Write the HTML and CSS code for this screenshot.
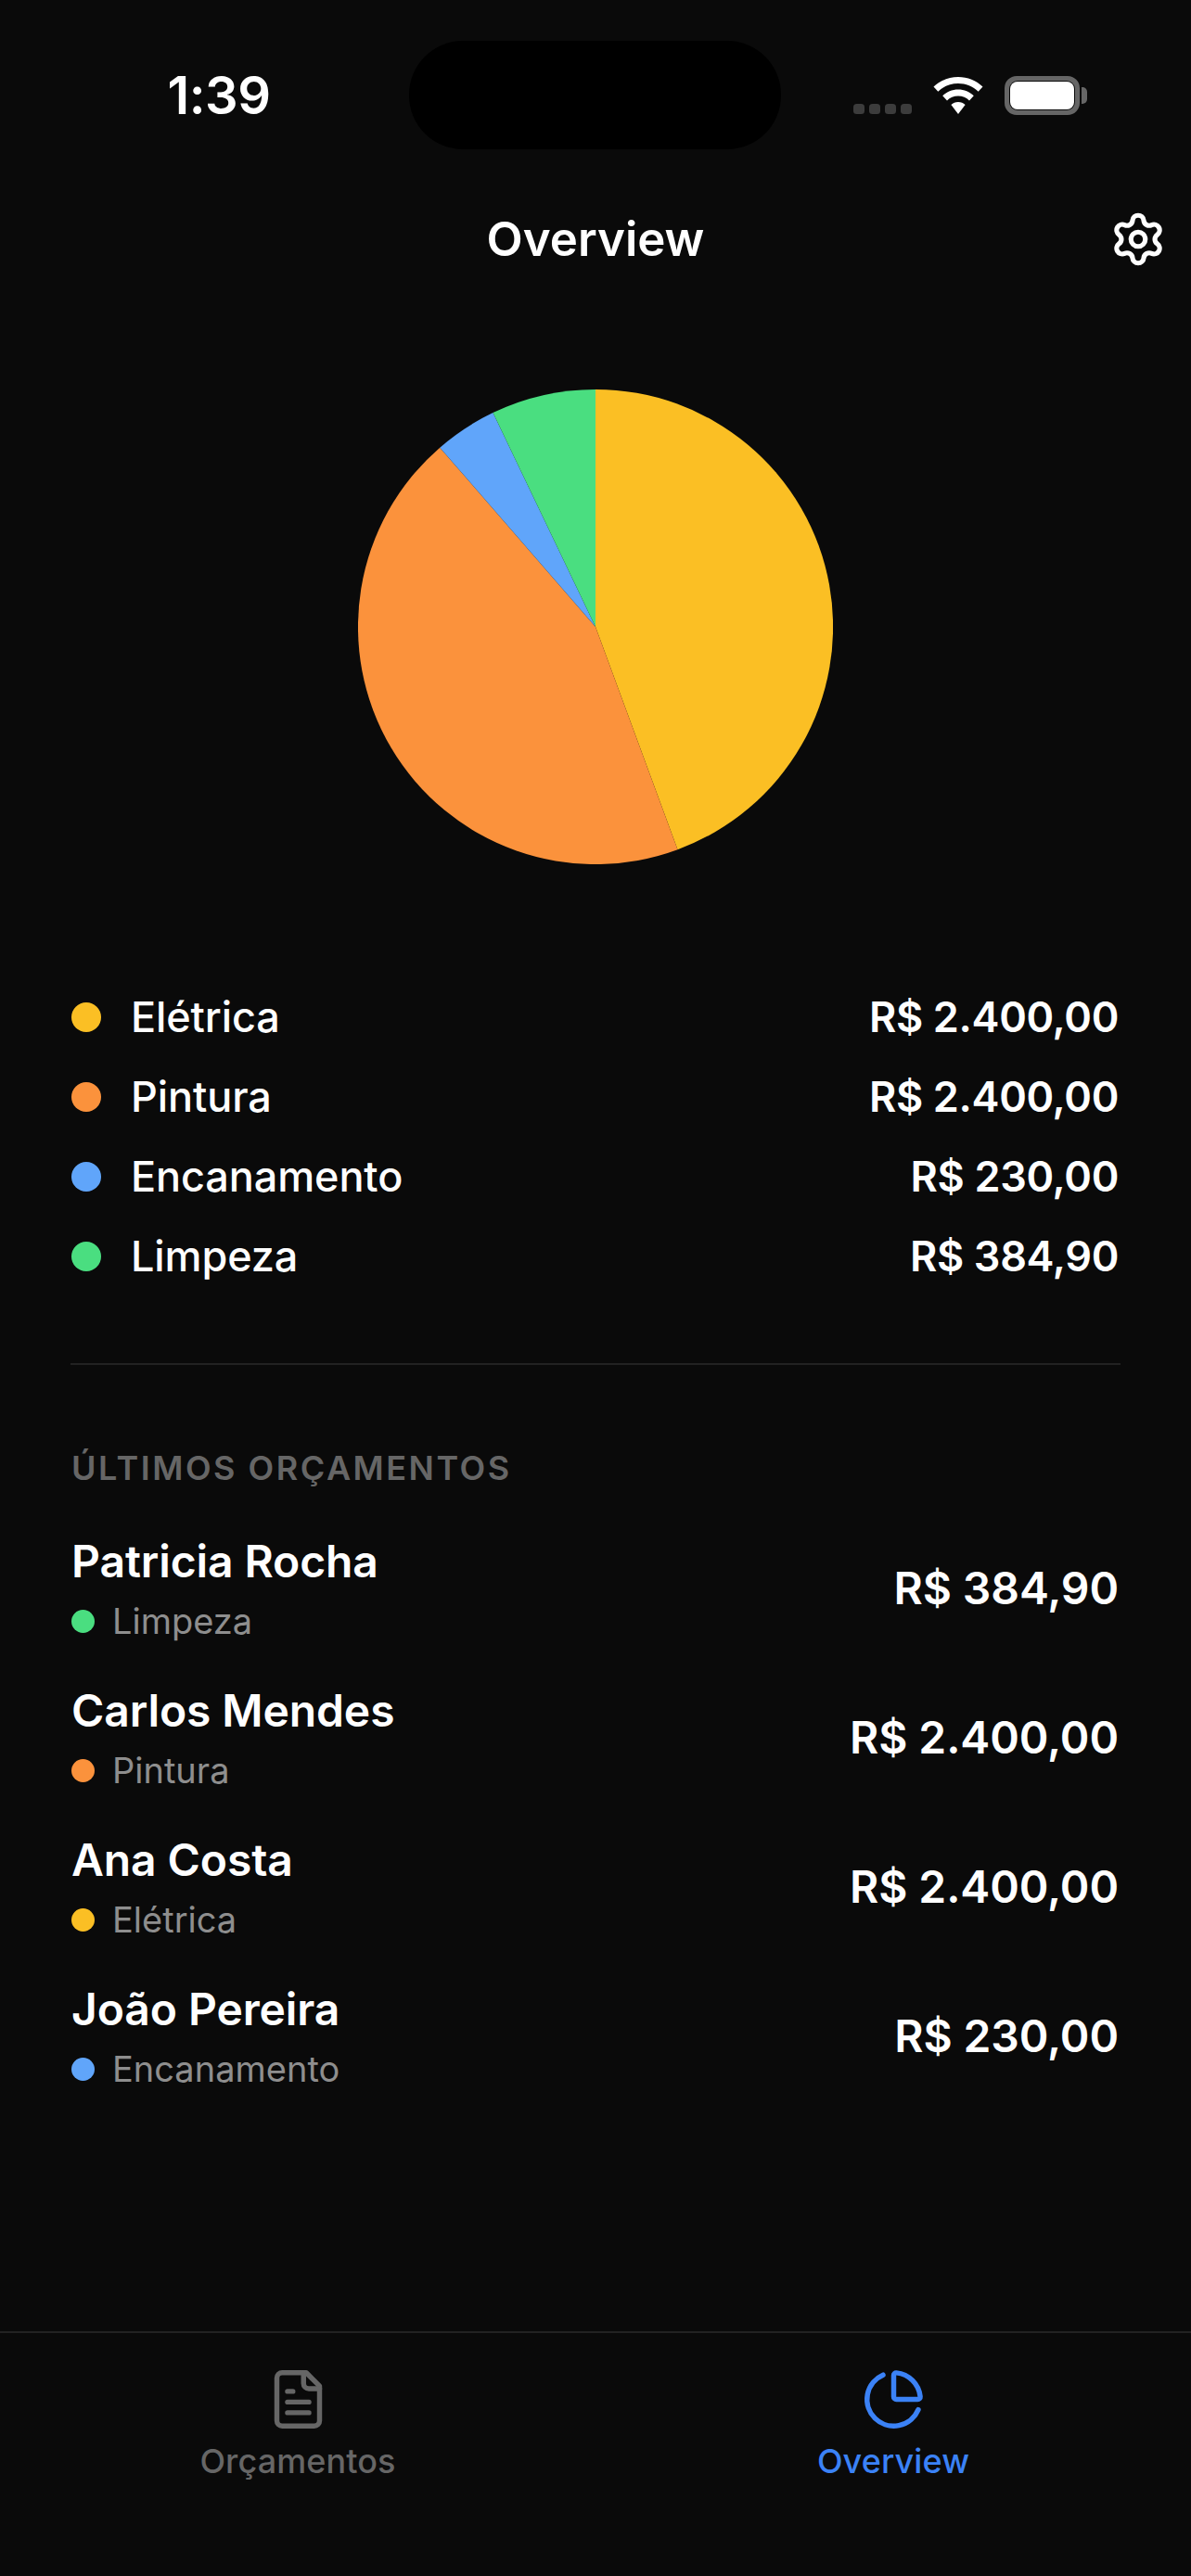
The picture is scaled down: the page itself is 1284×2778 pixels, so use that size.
FILE: index.html
```html
<!DOCTYPE html>
<html lang="pt-BR">
<head>
<meta charset="utf-8">
<title>Overview</title>
<link rel="stylesheet" href="styles.css">
</head>
<body>
<div class="screen">
  <div class="status">
    <div class="status-left"><span class="time">1:39</span></div>
    <div class="island"></div>
    <div class="status-right">
      <div class="signal"><i></i><i></i><i></i><i></i></div>
      <svg class="wifi" viewBox="0 0 54 40"><path d="M27 0C16.800 0 7.500 4 0.500 10.500L5.300 15.700C11.100 10.200 18.700 7 27 7C35.300 7 42.900 10.200 48.700 15.700L53.500 10.500C46.500 4 37.200 0 27 0Z"/><path d="M27 13.500C20.500 13.500 14.600 16 10.200 20.200L15 25.400C18.100 22.400 22.300 20.500 27 20.500C31.700 20.500 35.900 22.400 39 25.400L43.800 20.200C39.400 16 33.500 13.500 27 13.500Z"/><path d="M27 27C24 27 21.400 28.100 19.400 30L27 40L34.600 30C32.600 28.100 30 27 27 27Z"/></svg>
      <div class="battery"><div class="battery-body"><div class="battery-level"></div></div><div class="battery-cap"></div></div>
    </div>
  </div>

  <header class="header">
    <h1 class="title">Overview</h1>
    <svg class="gear" viewBox="0 0 24 24"><path d="M9.671 4.136a2.34 2.34 0 0 1 4.659 0 2.34 2.34 0 0 0 3.319 1.915 2.34 2.34 0 0 1 2.33 4.033 2.34 2.34 0 0 0 0 3.831 2.34 2.34 0 0 1-2.33 4.033 2.34 2.34 0 0 0-3.319 1.915 2.34 2.34 0 0 1-4.659 0 2.34 2.34 0 0 0-3.32-1.915 2.34 2.34 0 0 1-2.33-4.033 2.34 2.34 0 0 0 0-3.831A2.34 2.34 0 0 1 6.350 6.051a2.34 2.34 0 0 0 3.320-1.915"/><circle cx="12" cy="12" r="3"/></svg>
  </header>

  <section class="chart">
    <svg class="pie" viewBox="-255 -255 510 510">
      <path class="c-yellow" d="M0 0V-255A255 255 0 0 1 88.200 239.300Z"/>
      <path class="c-orange" d="M0 0L88.200 239.300A255 255 0 0 1 -167.100 -192.600Z"/>
      <path class="c-blue" d="M0 0L-167.100 -192.600A255 255 0 0 1 -110.100 -230Z"/>
      <path class="c-green" d="M0 0L-110.100 -230A255 255 0 0 1 0 -255Z"/>
    </svg>
  </section>

  <section class="legend">
    <div class="legend-row"><span class="legend-dot bg-yellow"></span><span class="legend-name">Elétrica</span><span class="legend-value">R$ 2.400,00</span></div>
    <div class="legend-row"><span class="legend-dot bg-orange"></span><span class="legend-name">Pintura</span><span class="legend-value">R$ 2.400,00</span></div>
    <div class="legend-row"><span class="legend-dot bg-blue"></span><span class="legend-name">Encanamento</span><span class="legend-value">R$ 230,00</span></div>
    <div class="legend-row"><span class="legend-dot bg-green"></span><span class="legend-name">Limpeza</span><span class="legend-value">R$ 384,90</span></div>
  </section>

  <div class="divider"></div>

  <section class="recent">
    <h2 class="section-title">ÚLTIMOS ORÇAMENTOS</h2>
    <div class="quote">
      <div class="quote-info"><div class="quote-name">Patricia Rocha</div><div class="quote-cat"><span class="cat-dot bg-green"></span>Limpeza</div></div>
      <div class="quote-value">R$ 384,90</div>
    </div>
    <div class="quote">
      <div class="quote-info"><div class="quote-name">Carlos Mendes</div><div class="quote-cat"><span class="cat-dot bg-orange"></span>Pintura</div></div>
      <div class="quote-value">R$ 2.400,00</div>
    </div>
    <div class="quote">
      <div class="quote-info"><div class="quote-name">Ana Costa</div><div class="quote-cat"><span class="cat-dot bg-yellow"></span>Elétrica</div></div>
      <div class="quote-value">R$ 2.400,00</div>
    </div>
    <div class="quote">
      <div class="quote-info"><div class="quote-name">João Pereira</div><div class="quote-cat"><span class="cat-dot bg-blue"></span>Encanamento</div></div>
      <div class="quote-value">R$ 230,00</div>
    </div>
  </section>

  <nav class="tabs">
    <div class="tab">
      <svg class="tab-icon" viewBox="0 0 24 24"><path d="M15 2H6a2 2 0 0 0-2 2v16a2 2 0 0 0 2 2h12a2 2 0 0 0 2-2V7Z"/><path d="M14 2v4a2 2 0 0 0 2 2h4"/><path d="M10 9H8"/><path d="M16 13H8"/><path d="M16 17H8"/></svg>
      <span class="tab-label">Orçamentos</span>
    </div>
    <div class="tab tab-active">
      <svg class="tab-icon" viewBox="0 0 24 24"><path d="M21 12c.552 0 1.005-.449.95-.998a10 10 0 0 0-8.953-8.951c-.55-.055-.998.398-.998.95v8a1 1 0 0 0 1 1z"/><path d="M21.210 15.890A10 10 0 1 1 8 2.830"/></svg>
      <span class="tab-label">Overview</span>
    </div>
  </nav>
</div>
</body>
</html>
```

FILE: styles.css
```css
* { box-sizing: border-box; }
html, body { margin: 0; padding: 0; background: #0a0a0a; }
body { font-family: Inter, "Liberation Sans", sans-serif; color: #fff; }
.screen { width: 1284px; height: 2778px; display: flex; flex-direction: column; overflow: hidden; background: #0a0a0a; }

.status { display: flex; padding-top: 44px; height: 161px; }
.status-left { width: 441px; height: 117px; display: flex; align-items: center; justify-content: center; padding-left: 31px; }
.time { font-size: 56px; font-weight: 600; line-height: 1; letter-spacing: -0.5px; }
.island { width: 401px; height: 117px; border-radius: 58px; background: #000; }
.status-right { flex: 1; display: flex; align-items: flex-start; padding: 38px 0 0 78px; height: 117px; }
.signal { display: flex; gap: 5.5px; margin-top: 30px; width: 63px; }
.signal i { display: block; width: 11.6px; height: 11px; border-radius: 3.5px; background: #3c3c3c; }
.wifi { width: 54px; height: 40px; margin-left: 23px; margin-top: 1px; fill: #fff; }
.battery { display: flex; align-items: center; margin-left: 23px; }
.battery-body { width: 81px; height: 42px; border: 6px solid #666; border-radius: 13px; padding: 0; background: #0a0a0a; }
.battery-level { width: 100%; height: 100%; background: #fff; border-radius: 8px; box-shadow: 0 0 0 1px #0a0a0a; }
.battery-cap { width: 6px; height: 18px; margin-left: 2px; background: #666; border-radius: 0 5px 5px 0; }

.header { height: 194px; display: grid; grid-template-columns: 1fr auto 1fr; align-items: center; }
.title { grid-column: 2; margin: 0; font-size: 51px; font-weight: 600; line-height: 60px; }
.gear { grid-column: 3; justify-self: end; width: 62px; height: 62px; margin-right: 26px; fill: none; stroke: #fff; stroke-width: 2; stroke-linecap: round; stroke-linejoin: round; }

.chart { padding: 65px 0 122px; }
.pie { display: block; width: 512px; height: 512px; margin: 0 auto; }
.c-yellow { fill: #fbbf24; }
.c-orange { fill: #fb923c; }
.c-blue { fill: #60a5fa; }
.c-green { fill: #4ade80; }
.bg-yellow { background: #fbbf24; }
.bg-orange { background: #fb923c; }
.bg-blue { background: #60a5fa; }
.bg-green { background: #4ade80; }

.legend { padding: 0 78px 0 77px; }
.legend-row { display: flex; align-items: center; height: 86px; }
.legend-dot { width: 32px; height: 32px; border-radius: 50%; margin-right: 32px; flex: none; }
.legend-name { flex: 1; font-size: 45px; font-weight: 500; line-height: 54px; letter-spacing: -0.1px; }
.legend-value { font-size: 45px; font-weight: 600; line-height: 54px; letter-spacing: -0.35px; }

.divider { height: 2px; margin: 72px 76px 0; background: #222; }

.recent { padding: 89px 78px 0 77px; }
.section-title { margin: 0 0 49px; font-size: 36px; font-weight: 600; line-height: 44px; letter-spacing: 2.5px; color: #666; }
.quote { display: flex; align-items: flex-start; justify-content: space-between; height: 121px; margin-bottom: 40px; }
.quote-name { font-size: 48px; font-weight: 600; line-height: 60px; letter-spacing: -0.1px; }
.quote-cat { display: flex; align-items: center; font-size: 38px; line-height: 61px; margin-top: 4px; color: #8e8e8e; }
.cat-dot { width: 25px; height: 25px; border-radius: 50%; margin-right: 19px; flex: none; }
.quote-value { align-self: center; font-size: 48px; font-weight: 600; line-height: 60px; letter-spacing: -0.1px; margin-bottom: 4px; }

.tabs { margin-top: auto; height: 264px; display: grid; grid-template-columns: 1fr 1fr; border-top: 2px solid #222; padding-top: 37px; }
.tab { display: flex; flex-direction: column; align-items: center; color: #666; }
.tab-active { color: #3b82f6; }
.tab-icon { width: 69px; height: 69px; fill: none; stroke: currentColor; stroke-width: 1.9; stroke-linecap: round; stroke-linejoin: round; }
.tab-label { margin-top: 10px; font-size: 36px; font-weight: 500; line-height: 44px; letter-spacing: 0.1px; }
```
